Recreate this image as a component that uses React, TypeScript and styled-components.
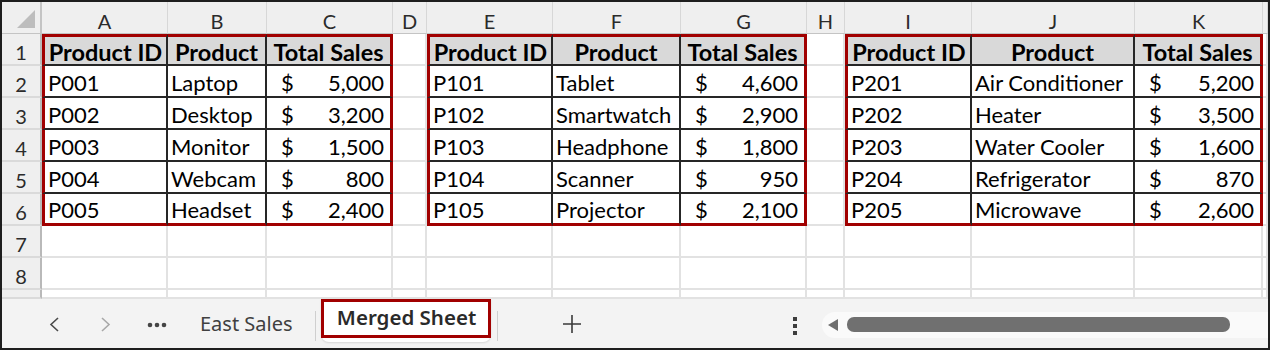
import React from "react";
import styled, { createGlobalStyle, css } from "styled-components";

const GlobalStyle = createGlobalStyle`
  html, body {
    margin: 0;
    padding: 0;
    background: #ffffff;
  }
  * {
    box-sizing: border-box;
  }
`;

const RED = "#a10000";
const INK = "#262626";
const GRID = "#e2e2e2";

const Frame = styled.div`
  width: 1270px;
  height: 350px;
  border: 2px solid #1e1e1e;
  display: flex;
  flex-direction: column;
  overflow: hidden;
  background: #ffffff;
`;

const Sheet = styled.div`
  display: grid;
  grid-template-columns: 40px 126px 99px 126px 34px 126px 128px 126px 38px 127px 163px 128px 5px;
  grid-template-rows: repeat(9, 32px) 9px;
  height: 297px;
  overflow: hidden;
  font-family: Lato, "Liberation Sans", sans-serif;
`;

const CornerCell = styled.div`
  background: #efefef;
  border-right: 2px solid #c4c4c4;
  border-bottom: 1px solid #c4c4c4;
  display: flex;
  align-items: flex-end;
  justify-content: flex-end;
  padding: 0 5px 5px 0;
`;

const ColHeader = styled.div`
  background: #efefef;
  border-right: 1px solid #d7d7d7;
  border-bottom: 1px solid #c4c4c4;
  display: flex;
  align-items: flex-end;
  justify-content: center;
  font-size: 20px;
  line-height: 1.2;
  color: #2b2b2b;
`;

const RowHeader = styled.div`
  background: #efefef;
  border-right: 2px solid #b9b9b9;
  border-bottom: 2px solid #dadada;
  display: flex;
  align-items: flex-end;
  justify-content: center;
  font-size: 20px;
  line-height: 1.15;
  color: #2b2b2b;
`;

type CellProps = {
  $table?: boolean;
  $head?: boolean;
  $redL?: boolean;
  $redR?: boolean;
  $redT?: boolean;
  $redB?: boolean;
};

const Cell = styled.div<CellProps>`
  display: flex;
  align-items: flex-end;
  justify-content: flex-start;
  min-width: 0;
  overflow: hidden;
  white-space: nowrap;
  padding: 0 0 0 3px;
  font-size: 22px;
  line-height: 1.2;
  color: #000000;
  border-right: 2px solid ${GRID};
  border-bottom: 2px solid ${GRID};

  ${(p) =>
    p.$table &&
    css`
      border-right-color: ${INK};
      border-bottom-color: ${INK};
    `}
  ${(p) =>
    p.$head &&
    css`
      background: #d9d9d9;
      font-weight: 700;
      font-size: 23.5px;
      line-height: 1;
      justify-content: center;
      padding: 0;
    `}
  ${(p) => p.$redL && `border-left: 3px solid ${RED};`}
  ${(p) => p.$redR && `border-right: 3px solid ${RED};`}
  ${(p) => p.$redT && `border-top: 3px solid ${RED};`}
  ${(p) => p.$redB && `border-bottom: 3px solid ${RED};`}
`;

const Money = styled.span`
  display: flex;
  justify-content: space-between;
  width: 100%;
  padding: 0 6px 0 11px;
`;

const TabBar = styled.div`
  height: 49px;
  background: #f3f3f3;
  display: flex;
  align-items: stretch;
  padding-left: 27px;
  font-family: "Noto Sans", "Open Sans", sans-serif;
  overflow: hidden;
`;

const NavButton = styled.div<{ $dim?: boolean }>`
  width: 51px;
  display: flex;
  align-items: center;
  justify-content: center;
  padding-top: 2px;
  color: ${(p) => (p.$dim ? "#a8a8a8" : "#4a4a4a")};
`;

const SheetTab = styled.div`
  display: flex;
  align-items: center;
  padding: 0 22px 0 16px;
  margin-left: 2px;
  font-size: 20px;
  color: #404040;
`;

const Divider = styled.div<{ $gap?: number }>`
  width: 1px;
  align-self: center;
  height: 30px;
  margin-top: 4px;
  margin-left: ${(p) => p.$gap ?? 0}px;
  background: #cfcfcf;
`;

const ActiveTab = styled.div`
  margin-left: 5px;
  height: 43px;
  background: #ffffff;
  border-radius: 0 0 8px 8px;
  box-shadow: 0 1px 2px rgba(0, 0, 0, 0.12);
  display: flex;
  align-items: flex-start;
`;

const ActiveLabel = styled.div`
  height: 39px;
  width: 170px;
  border: 3px solid ${RED};
  display: flex;
  align-items: center;
  justify-content: center;
  font-size: 20.5px;
  font-weight: 600;
  color: #2a2a2a;
  padding: 0 0 3px 2px;
`;

const AddButton = styled.div`
  width: 40px;
  margin-left: 54px;
  display: flex;
  align-items: center;
  justify-content: center;
  padding-top: 1px;
  color: #3a3a3a;
`;

const Spacer = styled.div`
  flex: 1;
`;

const Kebab = styled.div`
  width: 20px;
  margin-right: 17px;
  display: flex;
  align-items: center;
  justify-content: center;
  padding-top: 4px;
`;

const ScrollTrack = styled.div`
  flex: 0 0 460px;
  align-self: center;
  height: 26px;
  margin-top: 2px;
  margin-right: -14px;
  border-radius: 13px;
  background: #fafafa;
  display: flex;
  align-items: center;
  padding-left: 5px;
  gap: 8px;
`;

const ScrollThumb = styled.div`
  width: 383px;
  height: 15px;
  border-radius: 7px;
  background: #707070;
`;

const Chevron = ({ dir }: { dir: "left" | "right" }) => (
  <svg width="11" height="15" viewBox="0 0 11 15">
    <polyline
      points={dir === "left" ? "9,1 2,7.5 9,14" : "2,1 9,7.5 2,14"}
      fill="none"
      stroke="currentColor"
      strokeWidth="1.6"
    />
  </svg>
);

const MoreDots = () => (
  <svg width="20" height="6" viewBox="0 0 20 6">
    <circle cx="3" cy="3" r="2.3" fill="#454545" />
    <circle cx="10" cy="3" r="2.3" fill="#454545" />
    <circle cx="17" cy="3" r="2.3" fill="#454545" />
  </svg>
);

const PlusIcon = () => (
  <svg width="20" height="20" viewBox="0 0 20 20">
    <path d="M10 1v18M1 10h18" stroke="currentColor" strokeWidth="1.6" />
  </svg>
);

const KebabIcon = () => (
  <svg width="6" height="18" viewBox="0 0 6 18">
    <rect x="1" y="0" width="4" height="4" fill="#3c3c3c" />
    <rect x="1" y="7" width="4" height="4" fill="#3c3c3c" />
    <rect x="1" y="14" width="4" height="4" fill="#3c3c3c" />
  </svg>
);

const ArrowLeft = () => (
  <svg width="12" height="14" viewBox="0 0 12 14">
    <path d="M1 7 L11 1 L11 13 Z" fill="#6e6e6e" />
  </svg>
);

const SelectAll = () => (
  <svg width="18" height="18" viewBox="0 0 18 18">
    <path d="M18 0 L18 18 L0 18 Z" fill="#bdbdbd" />
  </svg>
);

type Row = [string, string, string];

const tables: { start: number; rows: Row[] }[] = [
  {
    start: 0,
    rows: [
      ["P001", "Laptop", "5,000"],
      ["P002", "Desktop", "3,200"],
      ["P003", "Monitor", "1,500"],
      ["P004", "Webcam", "800"],
      ["P005", "Headset", "2,400"],
    ],
  },
  {
    start: 4,
    rows: [
      ["P101", "Tablet", "4,600"],
      ["P102", "Smartwatch", "2,900"],
      ["P103", "Headphone", "1,800"],
      ["P104", "Scanner", "950"],
      ["P105", "Projector", "2,100"],
    ],
  },
  {
    start: 8,
    rows: [
      ["P201", "Air Conditioner", "5,200"],
      ["P202", "Heater", "3,500"],
      ["P203", "Water Cooler", "1,600"],
      ["P204", "Refrigerator", "870"],
      ["P205", "Microwave", "2,600"],
    ],
  },
];

const headers = ["Product ID", "Product", "Total Sales"];
const letters = ["A", "B", "C", "D", "E", "F", "G", "H", "I", "J", "K", ""];

function renderCell(r: number, c: number) {
  const t = tables.find((tb) => c >= tb.start && c < tb.start + 3);
  const key = `${r}-${c}`;
  if (!t || r > 5) return <Cell key={key} />;
  const k = c - t.start;
  const props: CellProps = {
    $table: true,
    $head: r === 0,
    $redL: k === 0,
    $redR: k === 2,
    $redT: r === 0,
    $redB: r === 5,
  };
  if (r === 0) return <Cell key={key} {...props}>{headers[k]}</Cell>;
  const value = t.rows[r - 1][k];
  if (k === 2) {
    return (
      <Cell key={key} {...props}>
        <Money>
          <span>$</span>
          <span>{value}</span>
        </Money>
      </Cell>
    );
  }
  return <Cell key={key} {...props}>{value}</Cell>;
}

export default function App() {
  const rows = [0, 1, 2, 3, 4, 5, 6, 7, 8];
  return (
    <>
      <GlobalStyle />
      <Frame>
        <Sheet>
          <CornerCell>
            <SelectAll />
          </CornerCell>
          {letters.map((l, i) => (
            <ColHeader key={`h${i}`}>{l}</ColHeader>
          ))}
          {rows.map((r) => (
            <React.Fragment key={`r${r}`}>
              <RowHeader>{r + 1 <= 8 ? r + 1 : ""}</RowHeader>
              {letters.map((_, c) => renderCell(r, c))}
            </React.Fragment>
          ))}
        </Sheet>
        <TabBar>
          <NavButton>
            <Chevron dir="left" />
          </NavButton>
          <NavButton $dim>
            <Chevron dir="right" />
          </NavButton>
          <NavButton>
            <MoreDots />
          </NavButton>
          <SheetTab>East Sales</SheetTab>
          <Divider />
          <ActiveTab>
            <ActiveLabel>Merged Sheet</ActiveLabel>
          </ActiveTab>
          <Divider $gap={6} />
          <AddButton>
            <PlusIcon />
          </AddButton>
          <Spacer />
          <Kebab>
            <KebabIcon />
          </Kebab>
          <ScrollTrack>
            <ArrowLeft />
            <ScrollThumb />
          </ScrollTrack>
        </TabBar>
      </Frame>
    </>
  );
}
